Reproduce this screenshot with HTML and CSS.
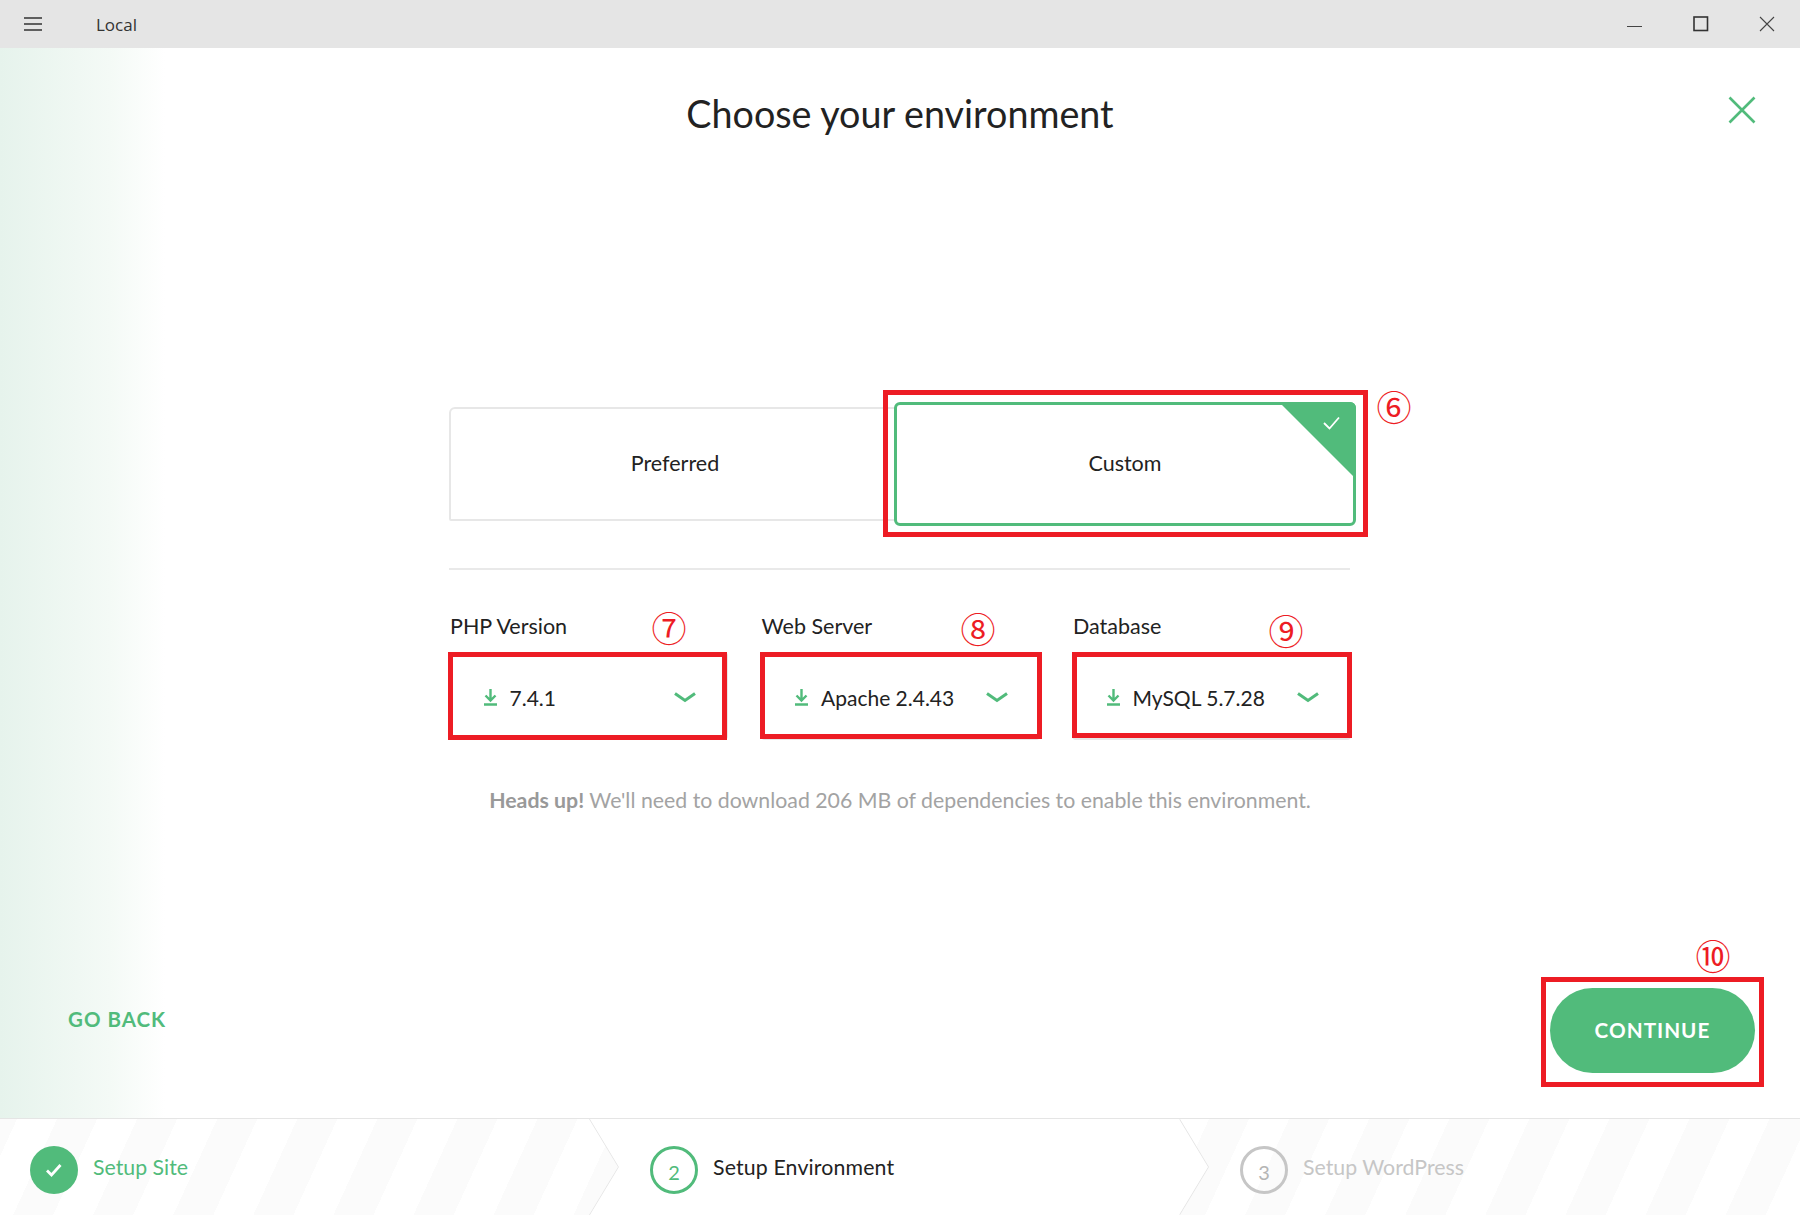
FILE: index.html
```html
<!DOCTYPE html>
<html lang="en">
<head>
<meta charset="utf-8">
<title>Local</title>
<link rel="stylesheet" href="styles.css">
</head>
<body>
<div class="app">
  <header class="titlebar">
    <svg class="menu-icon" width="18" height="14" viewBox="0 0 18 14"><path d="M0 1h18M0 7h18M0 13h18" stroke="#333" stroke-width="1.4" fill="none"/></svg>
    <span class="app-name">Local</span>
    <div class="win-controls">
      <svg width="16" height="16" viewBox="0 0 16 16"><path d="M0 10.5h15" stroke="#444" stroke-width="1" fill="none"/></svg>
      <svg width="16" height="16" viewBox="0 0 16 16"><rect x="1" y="1" width="13.5" height="13.5" stroke="#333" stroke-width="1.6" fill="none"/></svg>
      <svg width="16" height="16" viewBox="0 0 16 16"><path d="M1 1l14 14M15 1L1 15" stroke="#444" stroke-width="1.1" fill="none"/></svg>
    </div>
  </header>

  <main class="content">
    <svg class="close-x" width="28" height="28" viewBox="0 0 28 28"><path d="M1.5 1.5l25 25M26.5 1.5l-25 25" stroke="#51bb7b" stroke-width="2.6" fill="none"/></svg>
    <h1 class="title">Choose your environment</h1>
    <div class="settings">
      <div class="cards">
        <div class="card">Preferred</div>
        <div class="card card-active">
          <svg class="corner" width="77" height="77" viewBox="0 0 77 77"><path d="M0 0h77v77z" fill="#51bb7b"/><path d="M45 21l5.500 5.500L60 15.500" stroke="#fff" stroke-width="1.8" fill="none"/></svg>
          Custom
        </div>
      </div>
      <hr class="divider">
      <div class="selects">
        <div class="field">
          <label class="field-label">PHP Version</label>
          <div class="select">
            <svg class="dl" width="13" height="18" viewBox="0 0 13 18"><path d="M6.500 1v11M1.500 7.500l5 5 5-5M0 16.500h13" stroke="#51bb7b" stroke-width="2.400" fill="none"/></svg>
            <span class="value">7.4.1</span>
            <svg class="chev" width="22" height="11" viewBox="0 0 22 11"><path d="M1 1.500l10 7 10-7" stroke="#51bb7b" stroke-width="3" fill="none"/></svg>
          </div>
        </div>
        <div class="field">
          <label class="field-label">Web Server</label>
          <div class="select">
            <svg class="dl" width="13" height="18" viewBox="0 0 13 18"><path d="M6.500 1v11M1.500 7.500l5 5 5-5M0 16.500h13" stroke="#51bb7b" stroke-width="2.400" fill="none"/></svg>
            <span class="value">Apache 2.4.43</span>
            <svg class="chev" width="22" height="11" viewBox="0 0 22 11"><path d="M1 1.500l10 7 10-7" stroke="#51bb7b" stroke-width="3" fill="none"/></svg>
          </div>
        </div>
        <div class="field">
          <label class="field-label">Database</label>
          <div class="select">
            <svg class="dl" width="13" height="18" viewBox="0 0 13 18"><path d="M6.500 1v11M1.500 7.500l5 5 5-5M0 16.500h13" stroke="#51bb7b" stroke-width="2.400" fill="none"/></svg>
            <span class="value">MySQL 5.7.28</span>
            <svg class="chev" width="22" height="11" viewBox="0 0 22 11"><path d="M1 1.500l10 7 10-7" stroke="#51bb7b" stroke-width="3" fill="none"/></svg>
          </div>
        </div>
      </div>
    </div>
    <p class="notice"><strong>Heads up!</strong> We'll need to download 206 MB of dependencies to enable this environment.</p>
    <div class="actions">
      <a class="go-back">GO BACK</a>
      <button class="continue">CONTINUE</button>
    </div>
  </main>

  <footer class="steps">
    <div class="step step-done">
      <span class="bullet bullet-done"><svg width="18" height="16" viewBox="0 0 18 16"><path d="M2 8.500l4.500 4.500L15.500 3" stroke="#fff" stroke-width="2.800" fill="none"/></svg></span>
      <span class="step-label">Setup Site</span>
    </div>
    <div class="step step-current">
      <svg class="step-edges" width="620" height="96" viewBox="0 0 620 96"><path d="M0 0l29 48L0 96M591 0l29 48-29 48" stroke="#e4e4e4" stroke-width="1.500" fill="none"/></svg>
      <span class="bullet bullet-current">2</span>
      <span class="step-label">Setup Environment</span>
    </div>
    <div class="step step-todo">
      <span class="bullet bullet-todo">3</span>
      <span class="step-label">Setup WordPress</span>
    </div>
  </footer>

  <div class="mark mark-6"></div>
  <div class="mark mark-7"></div>
  <div class="mark mark-8"></div>
  <div class="mark mark-9"></div>
  <div class="mark mark-10"></div>
  <span class="num num-6">⑥</span>
  <span class="num num-7">⑦</span>
  <span class="num num-8">⑧</span>
  <span class="num num-9">⑨</span>
  <span class="num num-10">⑩</span>
</div>
</body>
</html>
```
FILE: styles.css
```css
* { box-sizing: border-box; }
html, body { margin: 0; padding: 0; }
body { font-family: "Lato", "Noto Sans", sans-serif; color: #222; background: #fff; }
.app { position: relative; width: 1800px; height: 1215px; display: flex; flex-direction: column; overflow: hidden; }

.titlebar { flex: 0 0 48px; background: #e5e5e5; display: flex; align-items: center; padding-left: 24px; }
.menu-icon { flex: none; }
.app-name { margin: 1px 0 0 54px; font: 17px/20px "Open Sans", sans-serif; color: #333; }
.win-controls { margin-left: auto; display: flex; gap: 50px; padding-right: 25px; margin-top: -1px; }

.content { flex: 1; position: relative; display: flex; flex-direction: column; align-items: center; background: linear-gradient(90deg, #e6f3ec 0, #f4faf6 110px, #fff 165px); }
.close-x { position: absolute; left: 1728px; top: 48px; }
.title { margin: 44px 0 0; font-size: 37.700px; line-height: 44px; font-weight: 400; color: #222; }
.settings { width: 902px; margin-top: 271px; }
.cards { display: flex; height: 114px; }
.card { flex: 0 0 452px; display: flex; align-items: center; justify-content: center; padding-bottom: 3px; border: 2px solid #e7e7e7; border-radius: 6px 0 0 2px; background: #fff; font-size: 21.500px; }
.card-active { position: relative; flex: 0 0 462px; height: 124px; margin: -5px -5px 0 -7px; border: 3px solid #51bb7b; border-radius: 6px; }
.corner { position: absolute; right: -3px; top: -3px; border-top-right-radius: 6px; }
.divider { height: 2px; margin: 47px 1px 0 0; border: 0; background: #e9e9e9; }
.selects { display: grid; grid-template-columns: repeat(3, 279px); column-gap: 32.500px; margin-top: 44px; }
.field-label { display: block; padding-left: 1px; font-size: 21.500px; line-height: 24px; }
.select { display: flex; align-items: center; height: 88px; margin-top: 14px; padding: 2px 30px 0 32.500px; border: 2px solid #e7e7e7; border-radius: 4px; background: #fff; }
.value { margin-left: 13px; font-size: 21px; }
.chev { margin-left: auto; margin-top: 0; }
.notice { margin: 46px 0 0; font-size: 21.300px; line-height: 28px; color: #a3a3a3; }
.notice strong { font-weight: 700; color: #999; }
.actions { width: 100%; margin-top: auto; padding: 0 45px 45px 68px; display: flex; align-items: flex-start; justify-content: space-between; }
.go-back { margin-top: 19px; font-size: 20.500px; line-height: 24px; font-weight: 700; letter-spacing: 1px; color: #51bb7b; }
.continue { width: 205px; height: 85px; padding-bottom: 2px; border: 0; border-radius: 43px; background: #51bb7b; color: #fff; font: 700 20.700px "Lato", sans-serif; letter-spacing: 1px; }

.steps { flex: 0 0 97px; display: flex; border-top: 1px solid #e5e5e5; background: repeating-linear-gradient(114.600deg, #fbfbfb 0, #fbfbfb 15.500px, #fff 15.500px, #fff 51.900px, #fbfbfb 51.900px, #fbfbfb 72.800px); font-size: 21.300px; }
.step { display: flex; align-items: center; gap: 15px; height: 96px; }
.step-label { margin-top: 0; }
.step-done { flex: 0 0 589px; padding-left: 30px; color: #51bb7b; }
.step-current { position: relative; z-index: 1; flex: 0 0 620px; margin-right: -29px; padding-left: 61px; background: #fff; color: #222; letter-spacing: 0.15px; clip-path: polygon(0 0, 591px 0, 620px 50%, 591px 100%, 0 100%, 29px 50%); }
.step-edges { position: absolute; left: 0; top: 0; }
.step-todo { flex: 1; padding-left: 60px; color: #c6c6c6; background: repeating-linear-gradient(114.600deg, #fff 0, #fff 26.400px, #fbfbfb 26.400px, #fbfbfb 62.800px, #fff 62.800px, #fff 72.800px); }
.bullet { flex: none; width: 48px; height: 48px; margin-top: 6px; display: flex; align-items: center; justify-content: center; border-radius: 50%; padding-top: 4px; font-size: 20px; }
.bullet-done { background: #51bb7b; padding-top: 0; }
.bullet-current { border: 3px solid #51bb7b; color: #51bb7b; }
.bullet-todo { border: 3px solid #c6c6c6; color: #b5b5b5; }

.mark { position: absolute; border: 5px solid #ed1c24; pointer-events: none; }
.mark-6 { left: 883px; top: 390px; width: 485px; height: 147px; }
.mark-7 { left: 448px; top: 652px; width: 279px; height: 88px; }
.mark-8 { left: 760px; top: 652px; width: 282px; height: 87px; }
.mark-9 { left: 1072px; top: 652px; width: 280px; height: 86px; }
.mark-10 { left: 1541px; top: 977px; width: 223px; height: 110px; }
.num { position: absolute; width: 40px; text-align: center; font: 35px/40px "Noto Sans CJK JP", sans-serif; color: #ed1c24; }
.num-6 { left: 1374px; top: 386px; }
.num-7 { left: 649px; top: 607px; }
.num-8 { left: 958px; top: 608px; }
.num-9 { left: 1266px; top: 610px; }
.num-10 { left: 1693px; top: 935px; }
```
